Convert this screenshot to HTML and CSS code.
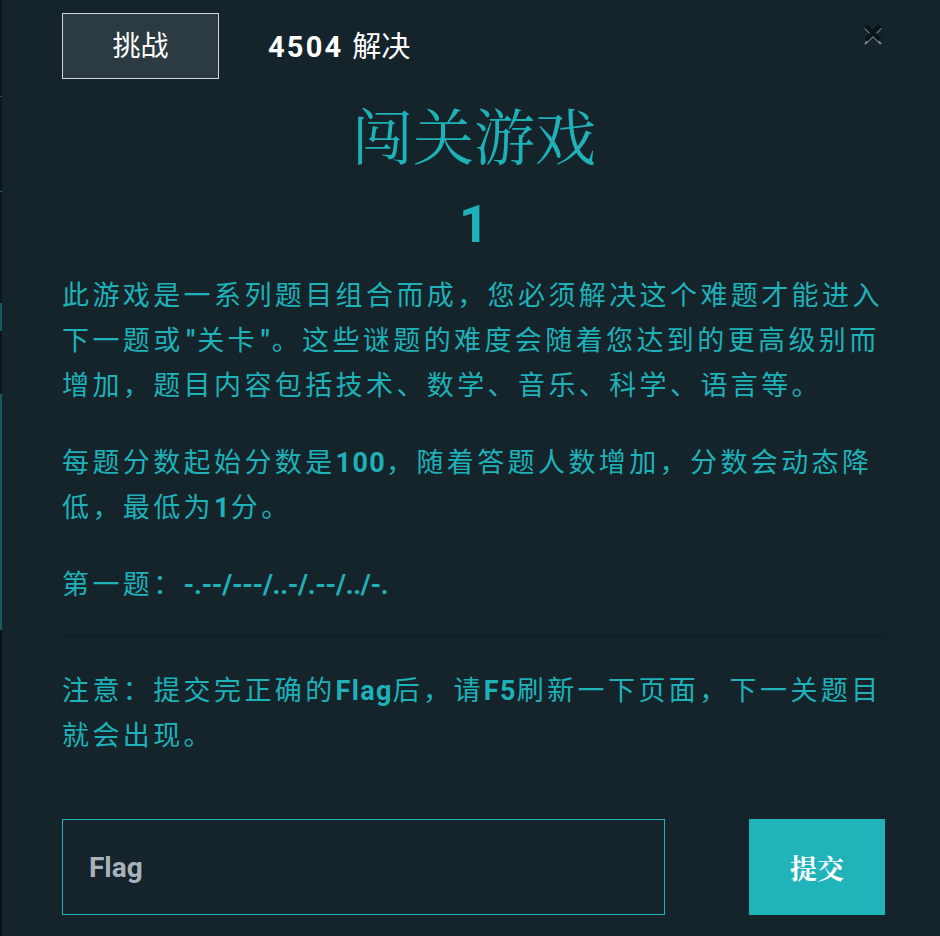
FILE: index.html
```html
<!DOCTYPE html>
<html lang="zh-CN">
<head>
<meta charset="utf-8">
<title>闯关游戏</title>
<link rel="stylesheet" href="styles.css">
</head>
<body>
<div class="edge">
  <div class="edge-dark h96"></div>
  <div class="edge-line"></div>
  <div class="edge-dark h94"></div>
  <div class="edge-line teal"></div>
  <div class="edge-dark h111"></div>
  <div class="edge-teal h28"></div>
  <div class="edge-dark h63"></div>
  <div class="edge-teal h236"></div>
  <div class="edge-rest"></div>
</div>
<div class="modal">
  <button class="close" aria-label="关闭">
    <svg width="24" height="24" viewBox="0 0 24 24">
      <path d="M4 6 L12 14 L20 6 M4 22 L12 14 L20 22" fill="none" stroke="#7c8a90" stroke-width="2"/>
      <path d="M5 4 L19 18 M19 4 L5 18" fill="none" stroke="#0b1418" stroke-width="4.5"/>
    </svg>
  </button>
  <header class="head">
    <div class="tab">挑战</div>
    <div class="solves"><b class="num">4504</b><span class="solved-label">解决</span></div>
  </header>
  <h1 class="title">闯关游戏</h1>
  <div class="value">1</div>
  <div class="desc">
    <p>此游戏是一系列题目组合而成，您必须解决这个难题才能进入下一题或<span class="q">"</span>关卡<span class="q">"</span>。这些谜题的难度会随着您达到的更高级别而增加，题目内容包括技术、数学、音乐、科学、语言等。</p>
    <p>每题分数起始分数是<b class="num">100</b>，随着答题人数增加，分数会动态降低，最低为<b class="num">1</b>分。</p>
    <p>第一题：<b class="num morse">-.--/---/..-/.--/../-.</b></p>
    <hr class="sep">
    <p>注意：提交完正确的<b class="num">Flag</b>后，请<b class="num">F5</b>刷新一下页面，下一关题目就会出现。</p>
  </div>
  <form class="submit-row" onsubmit="return false">
    <input class="flag" type="text" placeholder="Flag">
    <button class="go" type="submit">提交</button>
  </form>
</div>
</body>
</html>
```

FILE: styles.css
```css
html, body {
  margin: 0;
  padding: 0;
  height: 936px;
  background: #15232b;
  overflow: hidden;
}
body {
  display: flex;
  font-family: "Noto Sans CJK SC", "Noto Sans", sans-serif;
}
.edge {
  width: 2px;
  display: flex;
  flex-direction: column;
  flex-shrink: 0;
}
.edge-dark { background: #0d171b; }
.edge-line { height: 1px; background: #3a4a50; }
.edge-line.teal { background: #1c6d70; }
.edge-teal { background: #155a5e; }
.edge-rest { flex: 1; background: #0a1417; }
.h96 { height: 96px; }
.h94 { height: 94px; }
.h111 { height: 111px; }
.h28 { height: 28px; }
.h63 { height: 63px; }
.h236 { height: 236px; }

.modal {
  position: relative;
  flex: 1;
  padding: 13px 54px 0 60px;
  color: #1fb1b8;
}
.close {
  position: absolute;
  top: 22px;
  right: 55px;
  width: 24px;
  height: 24px;
  padding: 0;
  border: 0;
  background: none;
}
.close svg { display: block; }

.head {
  display: flex;
  align-items: center;
  height: 66px;
}
.tab {
  box-sizing: border-box;
  width: 157px;
  height: 66px;
  border: 1px solid #cfd6d9;
  background: #2c3a42;
  color: #fff;
  font-size: 28px;
  display: flex;
  align-items: center;
  justify-content: center;
  padding-bottom: 4px;
}
.solves {
  margin-left: 49px;
  color: #fff;
  font-size: 29px;
  padding-bottom: 4px;
}
.num {
  font-family: Roboto, "Liberation Sans", sans-serif;
  font-weight: 700;
  line-height: 1;
}
.solves .num { font-size: 29px; letter-spacing: 2.2px; }
.solved-label { margin-left: 9px; }

.title {
  margin: 19px 0 0;
  text-align: center;
  font-weight: 400;
  font-size: 61px;
  line-height: 72px;
  font-family: "Noto Serif CJK SC", "Noto Sans CJK SC", serif;
  color: #1fb1b8;
}
.value {
  margin-top: 25px;
  text-align: center;
  font-family: Roboto, "Liberation Sans", sans-serif;
  font-weight: 700;
  font-size: 52px;
  line-height: 60px;
  color: #1fb1b8;
}
.desc {
  margin-top: 16px;
  margin-right: -4px;
}
.desc p {
  margin: 0 0 32px;
  font-size: 27px;
  line-height: 45px;
  letter-spacing: 3.4px;
}
.desc p .num { letter-spacing: 1.3px; }
.desc p .morse { letter-spacing: -0.3px; }
.q {
  font-family: Roboto, "Liberation Sans", sans-serif;
  font-weight: 700;
  line-height: 1;
  letter-spacing: 1px;
  padding: 0 1px 0 3px;
}
.sep {
  margin: -1px 7px 29px 0;
  border: 0;
  height: 1px;
  background: #0f1c22;
}
.submit-row {
  display: flex;
  justify-content: space-between;
  margin-top: 63px;
  margin-right: 1px;
}
.flag {
  box-sizing: border-box;
  width: 603px;
  height: 96px;
  border: 1px solid #1fb1b8;
  background: #15232b;
  padding: 0 26px;
  font-family: Roboto, "Liberation Sans", sans-serif;
  font-weight: 700;
  font-size: 28px;
  color: #fff;
  outline: none;
}
.flag::placeholder { color: #a9b2ba; }
.go {
  width: 136px;
  height: 96px;
  border: 0;
  background: #21b3ba;
  color: #fff;
  font-family: "Noto Serif CJK SC", "Noto Sans CJK SC", serif;
  font-weight: 700;
  font-size: 27px;
}
```
